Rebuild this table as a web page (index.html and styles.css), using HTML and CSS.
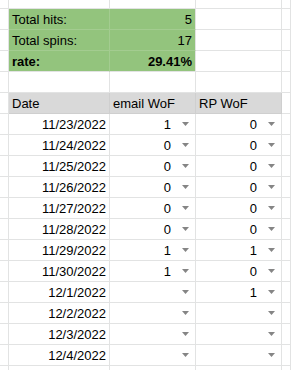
FILE: index.html
```html
<!DOCTYPE html>
<html>
<head>
<meta charset="utf-8">
<link rel="stylesheet" href="styles.css">
</head>
<body>
<div class="sheet">
  <div class="c"></div><div class="c"></div><div class="c"></div><div class="c"></div><div class="c"></div>

  <div class="c"></div><div class="c g gi">Total hits:</div><div class="c g r">5</div><div class="c"></div><div class="c"></div>
  <div class="c"></div><div class="c g gi">Total spins:</div><div class="c g r">17</div><div class="c"></div><div class="c"></div>
  <div class="c"></div><div class="c g b gl">rate:</div><div class="c g r b gb">29.41%</div><div class="c"></div><div class="c"></div>

  <div class="c"></div><div class="c"></div><div class="c"></div><div class="c"></div><div class="c"></div>

  <div class="c"></div><div class="c h">Date</div><div class="c h">email WoF</div><div class="c h">RP WoF</div><div class="c"></div>

  <div class="c"></div><div class="c r">11/23/2022</div><div class="c dd"><span>1</span><svg class="ar" width="7" height="4" viewBox="0 0 7 4"><polygon points="0,0 7,0 3.5,4"/></svg></div><div class="c dd"><span>0</span><svg class="ar" width="7" height="4" viewBox="0 0 7 4"><polygon points="0,0 7,0 3.5,4"/></svg></div><div class="c"></div>
  <div class="c"></div><div class="c r">11/24/2022</div><div class="c dd"><span>0</span><svg class="ar" width="7" height="4" viewBox="0 0 7 4"><polygon points="0,0 7,0 3.5,4"/></svg></div><div class="c dd"><span>0</span><svg class="ar" width="7" height="4" viewBox="0 0 7 4"><polygon points="0,0 7,0 3.5,4"/></svg></div><div class="c"></div>
  <div class="c"></div><div class="c r">11/25/2022</div><div class="c dd"><span>0</span><svg class="ar" width="7" height="4" viewBox="0 0 7 4"><polygon points="0,0 7,0 3.5,4"/></svg></div><div class="c dd"><span>0</span><svg class="ar" width="7" height="4" viewBox="0 0 7 4"><polygon points="0,0 7,0 3.5,4"/></svg></div><div class="c"></div>
  <div class="c"></div><div class="c r">11/26/2022</div><div class="c dd"><span>0</span><svg class="ar" width="7" height="4" viewBox="0 0 7 4"><polygon points="0,0 7,0 3.5,4"/></svg></div><div class="c dd"><span>0</span><svg class="ar" width="7" height="4" viewBox="0 0 7 4"><polygon points="0,0 7,0 3.5,4"/></svg></div><div class="c"></div>
  <div class="c"></div><div class="c r">11/27/2022</div><div class="c dd"><span>0</span><svg class="ar" width="7" height="4" viewBox="0 0 7 4"><polygon points="0,0 7,0 3.5,4"/></svg></div><div class="c dd"><span>0</span><svg class="ar" width="7" height="4" viewBox="0 0 7 4"><polygon points="0,0 7,0 3.5,4"/></svg></div><div class="c"></div>
  <div class="c"></div><div class="c r">11/28/2022</div><div class="c dd"><span>0</span><svg class="ar" width="7" height="4" viewBox="0 0 7 4"><polygon points="0,0 7,0 3.5,4"/></svg></div><div class="c dd"><span>0</span><svg class="ar" width="7" height="4" viewBox="0 0 7 4"><polygon points="0,0 7,0 3.5,4"/></svg></div><div class="c"></div>
  <div class="c"></div><div class="c r">11/29/2022</div><div class="c dd"><span>1</span><svg class="ar" width="7" height="4" viewBox="0 0 7 4"><polygon points="0,0 7,0 3.5,4"/></svg></div><div class="c dd"><span>1</span><svg class="ar" width="7" height="4" viewBox="0 0 7 4"><polygon points="0,0 7,0 3.5,4"/></svg></div><div class="c"></div>
  <div class="c"></div><div class="c r">11/30/2022</div><div class="c dd"><span>1</span><svg class="ar" width="7" height="4" viewBox="0 0 7 4"><polygon points="0,0 7,0 3.5,4"/></svg></div><div class="c dd"><span>0</span><svg class="ar" width="7" height="4" viewBox="0 0 7 4"><polygon points="0,0 7,0 3.5,4"/></svg></div><div class="c"></div>
  <div class="c"></div><div class="c r">12/1/2022</div><div class="c dd"><span></span><svg class="ar" width="7" height="4" viewBox="0 0 7 4"><polygon points="0,0 7,0 3.5,4"/></svg></div><div class="c dd"><span>1</span><svg class="ar" width="7" height="4" viewBox="0 0 7 4"><polygon points="0,0 7,0 3.5,4"/></svg></div><div class="c"></div>
  <div class="c"></div><div class="c r">12/2/2022</div><div class="c dd"><span></span><svg class="ar" width="7" height="4" viewBox="0 0 7 4"><polygon points="0,0 7,0 3.5,4"/></svg></div><div class="c dd"><span></span><svg class="ar" width="7" height="4" viewBox="0 0 7 4"><polygon points="0,0 7,0 3.5,4"/></svg></div><div class="c"></div>
  <div class="c"></div><div class="c r">12/3/2022</div><div class="c dd"><span></span><svg class="ar" width="7" height="4" viewBox="0 0 7 4"><polygon points="0,0 7,0 3.5,4"/></svg></div><div class="c dd"><span></span><svg class="ar" width="7" height="4" viewBox="0 0 7 4"><polygon points="0,0 7,0 3.5,4"/></svg></div><div class="c"></div>
  <div class="c"></div><div class="c r">12/4/2022</div><div class="c dd"><span></span><svg class="ar" width="7" height="4" viewBox="0 0 7 4"><polygon points="0,0 7,0 3.5,4"/></svg></div><div class="c dd"><span></span><svg class="ar" width="7" height="4" viewBox="0 0 7 4"><polygon points="0,0 7,0 3.5,4"/></svg></div><div class="c"></div>

  <div class="c"></div><div class="c"></div><div class="c"></div><div class="c"></div><div class="c"></div>
</div>
</body>
</html>
```
FILE: styles.css
```css
html, body {
  margin: 0;
  padding: 0;
  background: #ffffff;
}
body {
  width: 291px;
  height: 370px;
  overflow: hidden;
  font-family: "Liberation Sans", Arial, sans-serif;
  font-size: 13px;
  color: #000000;
}
.sheet {
  display: grid;
  grid-template-columns: 9px 101px 86px 86px 1fr;
  grid-template-rows: 9px repeat(17, 21px) 21px;
  width: 291px;
}
.c {
  box-sizing: border-box;
  border-right: 1px solid #e2e3e3;
  border-bottom: 1px solid #e2e3e3;
  padding: 2px 3px 0 3px;
  line-height: 18px;
  white-space: nowrap;
  overflow: hidden;
  min-width: 0;
}
.g {
  background: #93c47d;
}
.gi {
  border-right-color: #a3cc90;
  border-bottom-color: #a3cc90;
}
.g.r {
  border-bottom-color: #a3cc90;
}
.gl {
  border-right-color: #a3cc90;
}
.g.gb {
  border-bottom-color: #e2e3e3;
}
.gl {
  border-bottom-color: #e2e3e3;
}
.b {
  font-weight: bold;
}
.r {
  text-align: right;
}
.h {
  background: #d9d9d9;
  border-right-color: #cfcfcf;
  border-bottom-color: #cfcfcf;
}
.dd {
  display: flex;
  align-items: center;
  justify-content: flex-end;
  padding: 2px 6px 0 3px;
}
.dd span {
  margin-right: 11px;
  line-height: 18px;
  align-self: flex-start;
}
.ar {
  display: block;
  fill: #858585;
  margin-top: -2px;
}
```
